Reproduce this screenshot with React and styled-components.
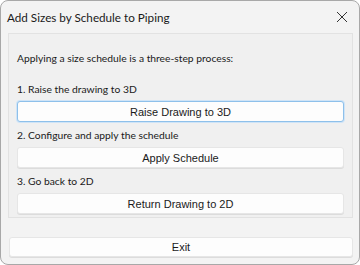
import React from 'react'
import styled, { createGlobalStyle } from 'styled-components'

const GlobalStyle = createGlobalStyle`
  html, body {
    margin: 0;
    padding: 0;
    background: #ffffff;
  }
  body {
    font-family: Lato, "Open Sans", "Liberation Sans", sans-serif;
  }
`

const steps = [
  { label: '1. Raise the drawing to 3D', action: 'Raise Drawing to 3D', focused: true },
  { label: '2. Configure and apply the schedule', action: 'Apply Schedule' },
  { label: '3. Go back to 2D', action: 'Return Drawing to 2D' },
]

export default function App() {
  return (
    <>
      <GlobalStyle />
      <Window>
        <TitleBar>
          <Title>Add Sizes by Schedule to Piping</Title>
          <CloseButton aria-label="Close">
            <svg width="12" height="12" viewBox="0 0 12 12">
              <path d="M1 1 L11 11 M11 1 L1 11" stroke="#333" strokeWidth="1" fill="none" />
            </svg>
          </CloseButton>
        </TitleBar>
        <Group>
          <Intro>Applying a size schedule is a three-step process:</Intro>
          {steps.map((s) => (
            <Step key={s.label}>
              <StepLabel>{s.label}</StepLabel>
              <Button $focused={s.focused}>{s.action}</Button>
            </Step>
          ))}
        </Group>
        <Footer>
          <Button $wide>Exit</Button>
        </Footer>
      </Window>
    </>
  )
}

const Window = styled.div`
  box-sizing: border-box;
  width: 360px;
  height: 265px;
  display: flex;
  flex-direction: column;
  background: #f3f3f3;
  border: 1px solid #a8a8a8;
  border-radius: 8px;
  overflow: hidden;
`

const TitleBar = styled.div`
  display: flex;
  align-items: center;
  justify-content: space-between;
  height: 31px;
  padding: 0 9px 0 6px;
`

const Title = styled.span`
  font-size: 11.7px;
  color: #1a1a1a;
  margin-top: 1px;
`

const CloseButton = styled.div`
  display: flex;
  align-items: center;
  justify-content: center;
  width: 16px;
  height: 16px;
`

const Group = styled.div`
  box-sizing: border-box;
  margin: 1px 6px 0 7px;
  height: 185px;
  padding: 16px 8px 0 8px;
  display: flex;
  flex-direction: column;
  background: #f0f0f0;
  border: 1px solid #e2e2e2;
`

const Text = styled.div`
  font-size: 10.3px;
  line-height: 16px;
  color: #1a1a1a;
`

const Intro = styled(Text)`
  margin-bottom: 15px;
`

const Step = styled.div`
  display: flex;
  flex-direction: column;
  margin-bottom: 5px;
`

const StepLabel = styled(Text)`
  margin-bottom: 4px;
`

const Button = styled.div`
  box-sizing: border-box;
  height: ${(p) => (p.$wide ? '20px' : '21px')};
  display: flex;
  align-items: center;
  justify-content: center;
  font-family: "Liberation Sans", Arial, sans-serif;
  font-size: 11px;
  color: #1a1a1a;
  background: #fdfdfd;
  border: 1px solid ${(p) => (p.$focused ? '#8ec0ea' : '#e6e6e6')};
  border-radius: 3px;
  box-shadow: ${(p) => (p.$focused ? '0 0 0 1px #cfe4f7' : '0 1px 0 #dcdcdc')};
`

const Footer = styled.div`
  padding: 19px 6px 0 8px;
`
